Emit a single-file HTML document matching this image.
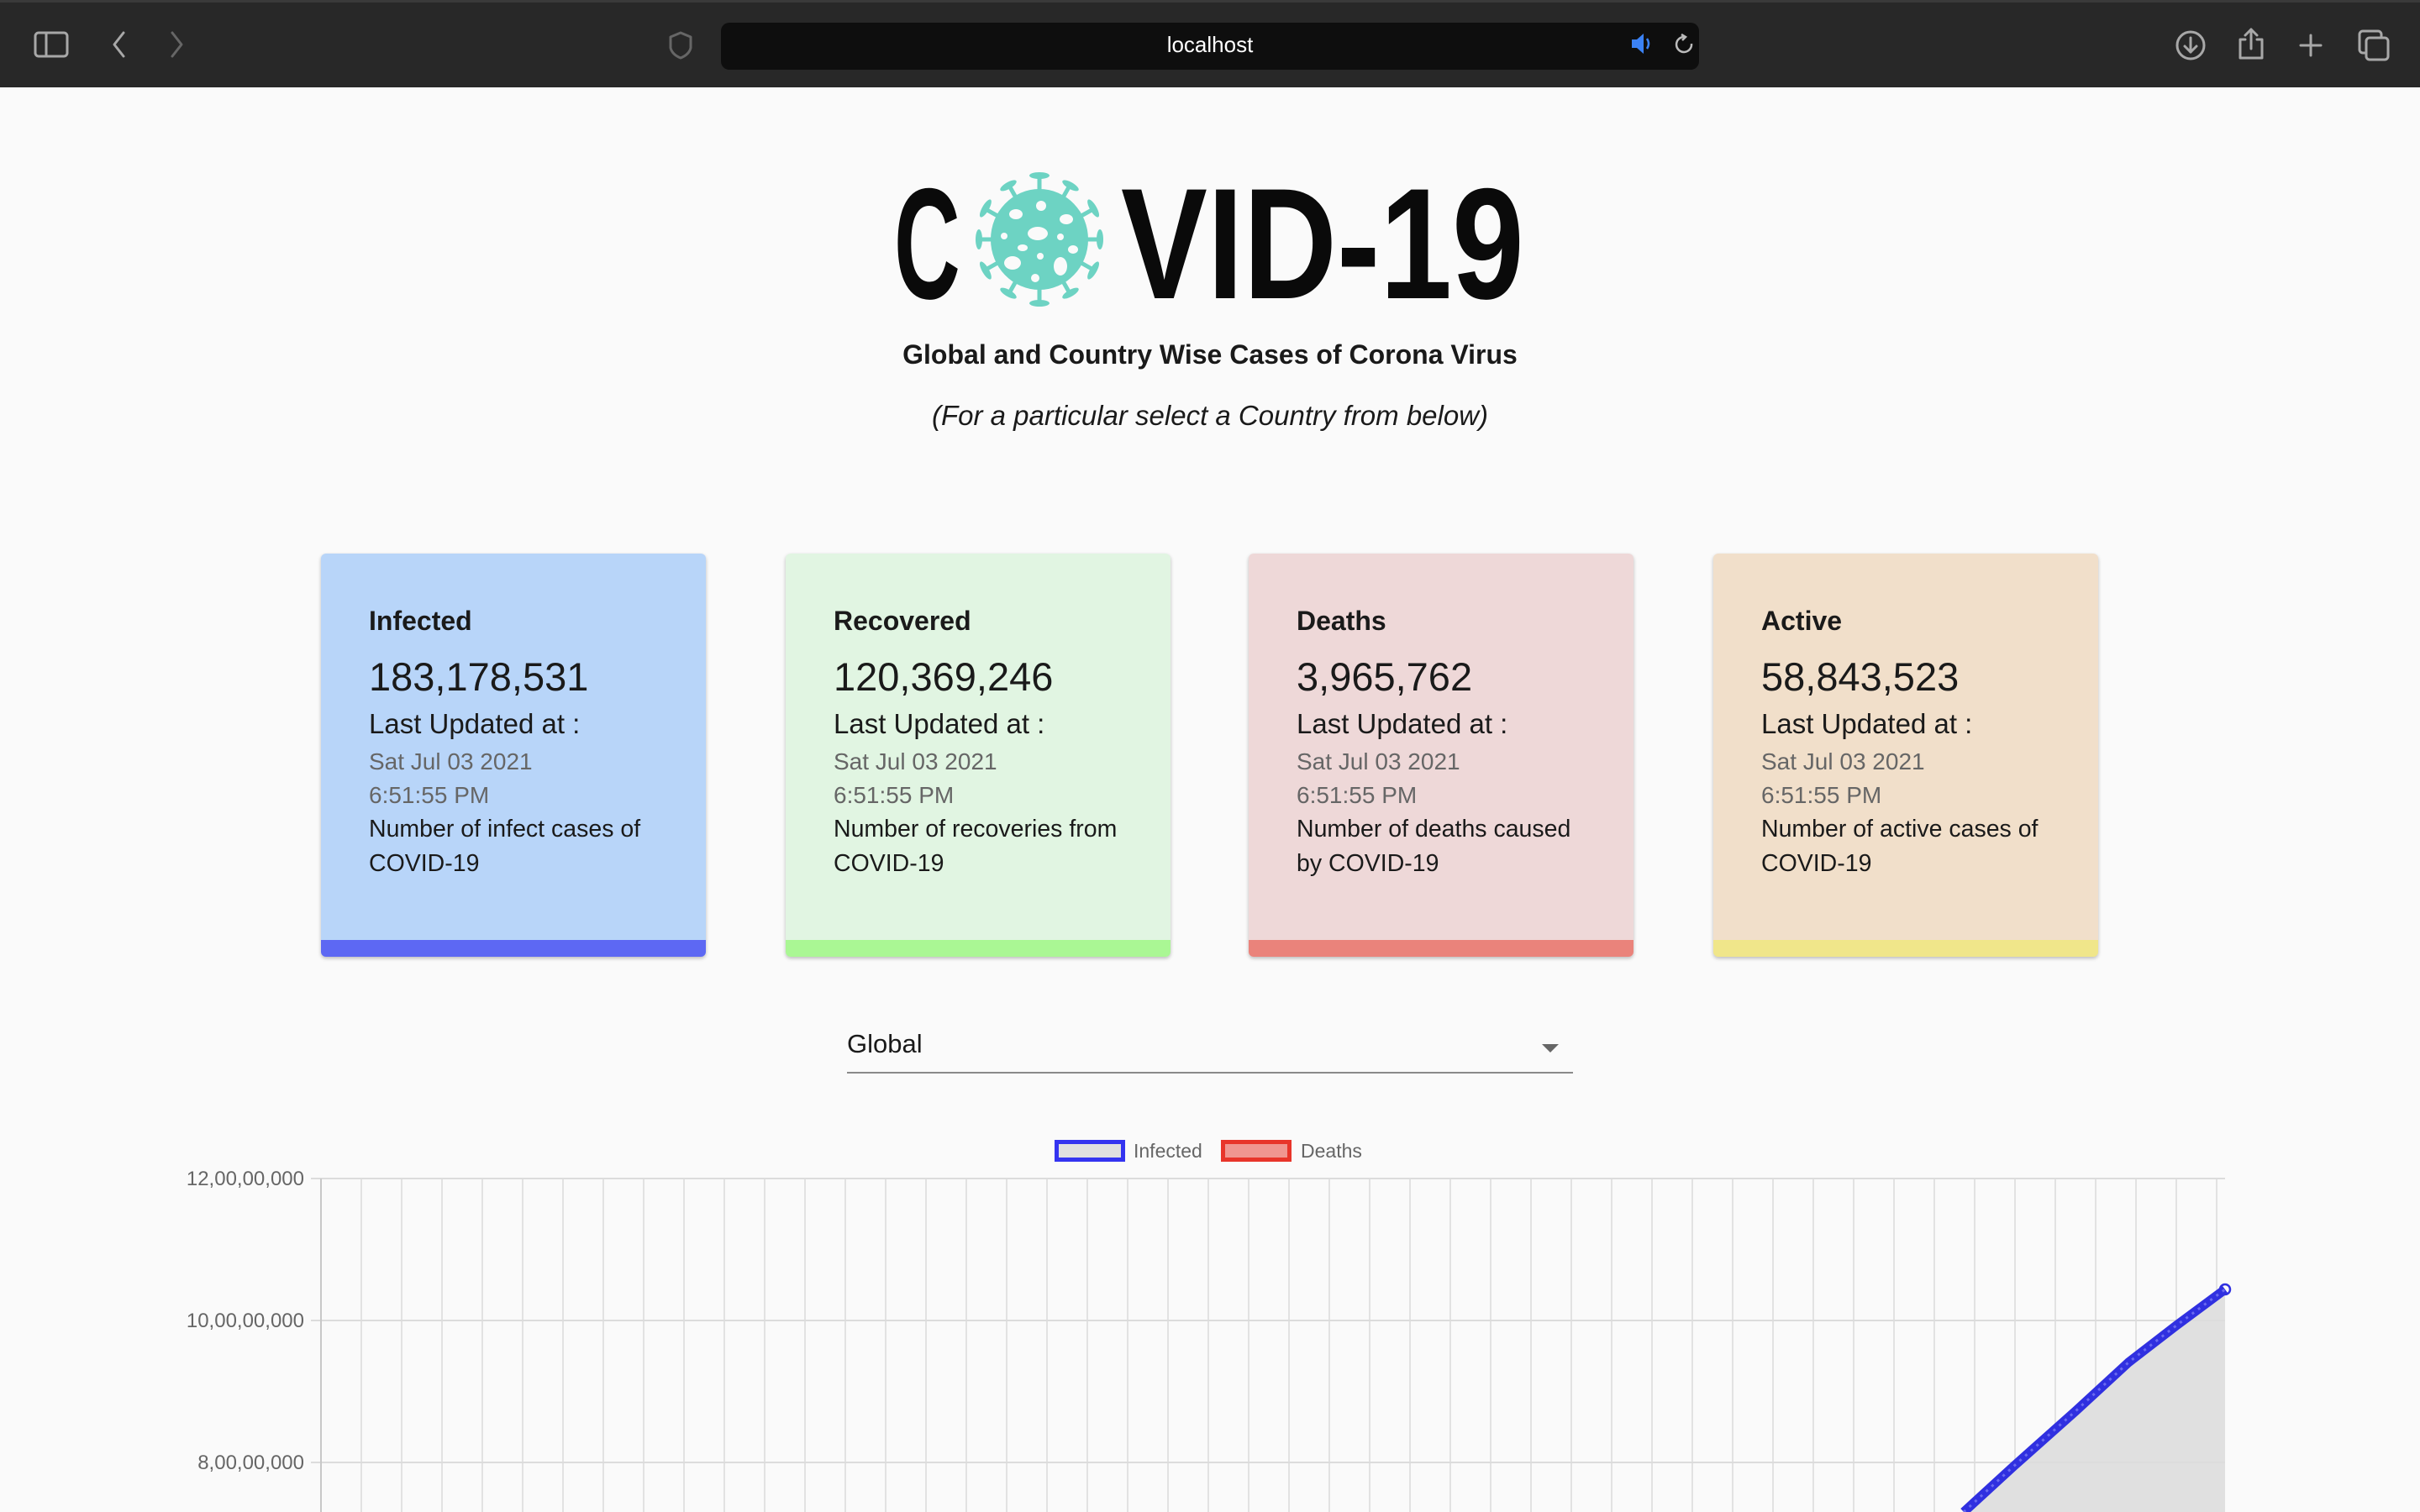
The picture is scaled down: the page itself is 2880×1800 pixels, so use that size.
<!DOCTYPE html>
<html><head><meta charset="utf-8">
<style>
*{margin:0;padding:0;box-sizing:border-box}
html,body{width:2880px;height:1800px;overflow:hidden;background:#fafafa;font-family:"Liberation Sans",sans-serif;color:#1a1a1a}
.bar{position:absolute;left:0;top:0;width:2880px;height:104px;background:#282828;border-top:3px solid #3a3a3a}
.url{position:absolute;left:858px;top:24px;width:1164px;height:56px;background:#0e0e0e;border-radius:10px;color:#fff;font-size:26px;text-align:center;line-height:52px}
.abs{position:absolute}
.card{position:absolute;top:659px;width:458px;height:480px;border-radius:6px;overflow:hidden;box-shadow:0 2px 4px rgba(0,0,0,.25)}
.card .b{position:absolute;left:0;bottom:0;width:100%;height:20px}
.card div.t{position:absolute;left:57px;white-space:nowrap}
.ti{font-size:32px;font-weight:bold;top:62px}
.nu{font-size:47px;top:119px}
.lu{font-size:33px;top:184px}
.d1{font-size:28px;color:#666;top:232px}
.d2{font-size:28px;color:#666;top:272px}
.s1{font-size:28.5px;top:312px}
.s2{font-size:28.5px;top:353px}
.yl{position:absolute;font-size:24px;color:#666;right:2518px;white-space:nowrap}
</style></head><body>
<div class="bar">
<svg class="abs" style="left:0;top:0" width="2880" height="104" fill="none" stroke="#a8a8a8" stroke-width="3" stroke-linecap="round" stroke-linejoin="round">
<rect x="42" y="36" width="38" height="28" rx="4"/><line x1="55" y1="36" x2="55" y2="64"/>
<polyline points="147,36 136,50 147,64"/>
<polyline points="205,36 216,50 205,64" stroke="#666"/>
<path d="M810 36 L822 41 L822 54 Q820 62 810 66 Q800 62 798 54 L798 41 Z" stroke="#666"/>
<circle cx="2607" cy="51" r="16"/><polyline points="2607,42 2607,59"/><polyline points="2600,52 2607,59 2614,52"/>
<path d="M2672 44 L2666 44 L2666 66 L2692 66 L2692 44 L2686 44"/><polyline points="2679,32 2679,55"/><polyline points="2672,39 2679,32 2686,39"/>
<line x1="2738" y1="51" x2="2762" y2="51"/><line x1="2750" y1="39" x2="2750" y2="63"/>
<rect x="2808" y="34" width="26" height="26" rx="4"/><rect x="2816" y="42" width="26" height="26" rx="4" fill="#282828"/>
</svg>
<div class="url">localhost</div>
<svg class="abs" style="left:1938px;top:34px" width="80" height="30"><path d="M4 10h6l8-7v24l-8-7H4z" fill="#3b82f6"/><path d="M22 9q4 6 0 12" stroke="#3b82f6" stroke-width="2.5" fill="none"/><path d="M67 7a9 9 0 1 0 8 8" stroke="#bbb" stroke-width="2.5" fill="none"/><path d="M63 4l5 3-4 4" stroke="#bbb" stroke-width="2.5" fill="none"/></svg>
</div>

<!-- Logo -->
<div class="abs" style="left:1064px;top:180px;font-size:188px;font-weight:bold;color:#0a0a0a;transform:scaleX(.58);transform-origin:left top;line-height:220px">C</div>
<div class="abs" style="left:1334px;top:180px;font-size:188px;font-weight:bold;color:#0a0a0a;transform:scaleX(.82);transform-origin:left top;line-height:220px;white-space:nowrap">VID-19</div>
<svg class="abs" style="left:1157px;top:203px" width="160" height="164" viewBox="-80 -82 160 164">
<g fill="#6dd3c3" stroke="#6dd3c3">
<g stroke-width="5">
<line x1="0" y1="0" x2="0" y2="-74"/><line x1="0" y1="0" x2="0" y2="74"/><line x1="0" y1="0" x2="-70" y2="0"/><line x1="0" y1="0" x2="70" y2="0"/>
<line x1="0" y1="0" x2="36" y2="-64"/><line x1="0" y1="0" x2="-36" y2="-64"/><line x1="0" y1="0" x2="36" y2="64"/><line x1="0" y1="0" x2="-36" y2="64"/>
<line x1="0" y1="0" x2="64" y2="-36"/><line x1="0" y1="0" x2="-64" y2="-36"/><line x1="0" y1="0" x2="64" y2="36"/><line x1="0" y1="0" x2="-64" y2="36"/>
</g>
<g stroke="none">
<ellipse cx="0" cy="-76" rx="12" ry="4"/><ellipse cx="0" cy="76" rx="12" ry="4"/><ellipse cx="-72" cy="0" rx="4" ry="12"/><ellipse cx="72" cy="0" rx="4" ry="12"/>
<ellipse transform="rotate(30) translate(0,-74)" rx="11" ry="4"/><ellipse transform="rotate(-30) translate(0,-74)" rx="11" ry="4"/>
<ellipse transform="rotate(150) translate(0,-74)" rx="11" ry="4"/><ellipse transform="rotate(-150) translate(0,-74)" rx="11" ry="4"/>
<ellipse transform="rotate(60) translate(0,-74)" rx="12" ry="4"/><ellipse transform="rotate(-60) translate(0,-74)" rx="12" ry="4"/>
<ellipse transform="rotate(120) translate(0,-74)" rx="12" ry="4"/><ellipse transform="rotate(-120) translate(0,-74)" rx="12" ry="4"/>
<ellipse cx="0" cy="0" rx="58" ry="60"/>
</g>
<g fill="#fafafa" stroke="none">
<ellipse cx="2" cy="-40" rx="6" ry="6"/><ellipse cx="-28" cy="-30" rx="8" ry="6"/><ellipse cx="32" cy="-24" rx="8" ry="6"/>
<ellipse cx="-2" cy="-7" rx="12" ry="8"/><ellipse cx="-42" cy="-4" rx="4" ry="4"/><ellipse cx="25" cy="-3" rx="4" ry="4"/>
<ellipse cx="-20" cy="10" rx="6" ry="4"/><ellipse cx="40" cy="12" rx="6" ry="5"/><ellipse cx="1" cy="20" rx="4" ry="4"/>
<ellipse cx="-32" cy="28" rx="10" ry="8"/><ellipse cx="25" cy="32" rx="8" ry="11"/><ellipse cx="-5" cy="46" rx="5" ry="5"/>
</g></g></svg>

<div class="abs" style="left:0;width:2880px;top:404px;text-align:center;font-size:32px;font-weight:bold">Global and Country Wise Cases of Corona Virus</div>
<div class="abs" style="left:0;width:2880px;top:476px;text-align:center;font-size:33px;font-style:italic">(For a particular select a Country from below)</div>

<div class="card" style="left:382px;background:#b8d5f9"><div class="t ti">Infected</div><div class="t nu">183,178,531</div><div class="t lu">Last Updated at :</div><div class="t d1">Sat Jul 03 2021</div><div class="t d2">6:51:55 PM</div><div class="t s1">Number of infect cases of</div><div class="t s2">COVID-19</div><div class="b" style="background:#5d68f3"></div></div>
<div class="card" style="left:935px;background:#e1f5e2"><div class="t ti">Recovered</div><div class="t nu">120,369,246</div><div class="t lu">Last Updated at :</div><div class="t d1">Sat Jul 03 2021</div><div class="t d2">6:51:55 PM</div><div class="t s1">Number of recoveries from</div><div class="t s2">COVID-19</div><div class="b" style="background:#aaf794"></div></div>
<div class="card" style="left:1486px;background:#eed8d8"><div class="t ti">Deaths</div><div class="t nu">3,965,762</div><div class="t lu">Last Updated at :</div><div class="t d1">Sat Jul 03 2021</div><div class="t d2">6:51:55 PM</div><div class="t s1">Number of deaths caused</div><div class="t s2">by COVID-19</div><div class="b" style="background:#ea837b"></div></div>
<div class="card" style="left:2039px;background:#f1dfca"><div class="t ti">Active</div><div class="t nu">58,843,523</div><div class="t lu">Last Updated at :</div><div class="t d1">Sat Jul 03 2021</div><div class="t d2">6:51:55 PM</div><div class="t s1">Number of active cases of</div><div class="t s2">COVID-19</div><div class="b" style="background:#f0e68a"></div></div>

<div class="abs" style="left:1008px;top:1225px;font-size:31px">Global</div>
<div class="abs" style="left:1835px;top:1243px;width:0;height:0;border-left:10px solid transparent;border-right:10px solid transparent;border-top:10px solid #666"></div>
<div class="abs" style="left:1008px;top:1276px;width:864px;height:2px;background:#8a8a8a"></div>

<div class="abs" style="left:1255px;top:1357px;width:84px;height:26px;border:5px solid #3434f0;background:#e0e0e0"></div>
<div class="abs" style="left:1349px;top:1357px;font-size:23px;color:#666">Infected</div>
<div class="abs" style="left:1453px;top:1357px;width:84px;height:26px;border:5px solid #e8352a;background:#f09690"></div>
<div class="abs" style="left:1548px;top:1357px;font-size:23px;color:#666">Deaths</div>

<div class="yl" style="top:1390px">12,00,00,000</div>
<div class="yl" style="top:1559px">10,00,00,000</div>
<div class="yl" style="top:1728px">8,00,00,000</div>

<svg class="abs" style="left:0;top:0" width="2880" height="1800">
<defs><pattern id="v" x="381" y="0" width="48" height="1800" patternUnits="userSpaceOnUse"><rect x="0" y="0" width="2" height="1800" fill="#e2e2e2"/></pattern></defs>
<rect x="381" y="1403" width="2258" height="397" fill="url(#v)"/>
<polygon points="2337,1800 2397,1745 2470,1680 2533,1622 2590,1578 2648,1535 2648,1800" fill="#e0e0e0"/>
<g stroke="#dcdcdc" stroke-width="2">
<line x1="370" y1="1403" x2="2648" y2="1403"/><line x1="370" y1="1572" x2="2648" y2="1572"/><line x1="370" y1="1741" x2="2648" y2="1741"/>
</g>
<rect x="381" y="1403" width="2" height="397" fill="#c8c8c8"/>
<polyline points="2337,1800 2397,1745 2470,1680 2533,1622 2590,1578 2648,1535" fill="none" stroke="#3030e0" stroke-width="11" stroke-linejoin="round"/>
<polyline points="2337,1800 2397,1745 2470,1680 2533,1622 2590,1578 2648,1535" fill="none" stroke="#6a6af0" stroke-width="3" stroke-dasharray="3 6"/>
<circle cx="2648" cy="1535" r="6" fill="none" stroke="#3030e0" stroke-width="2.5"/>
</svg>
</body></html>
